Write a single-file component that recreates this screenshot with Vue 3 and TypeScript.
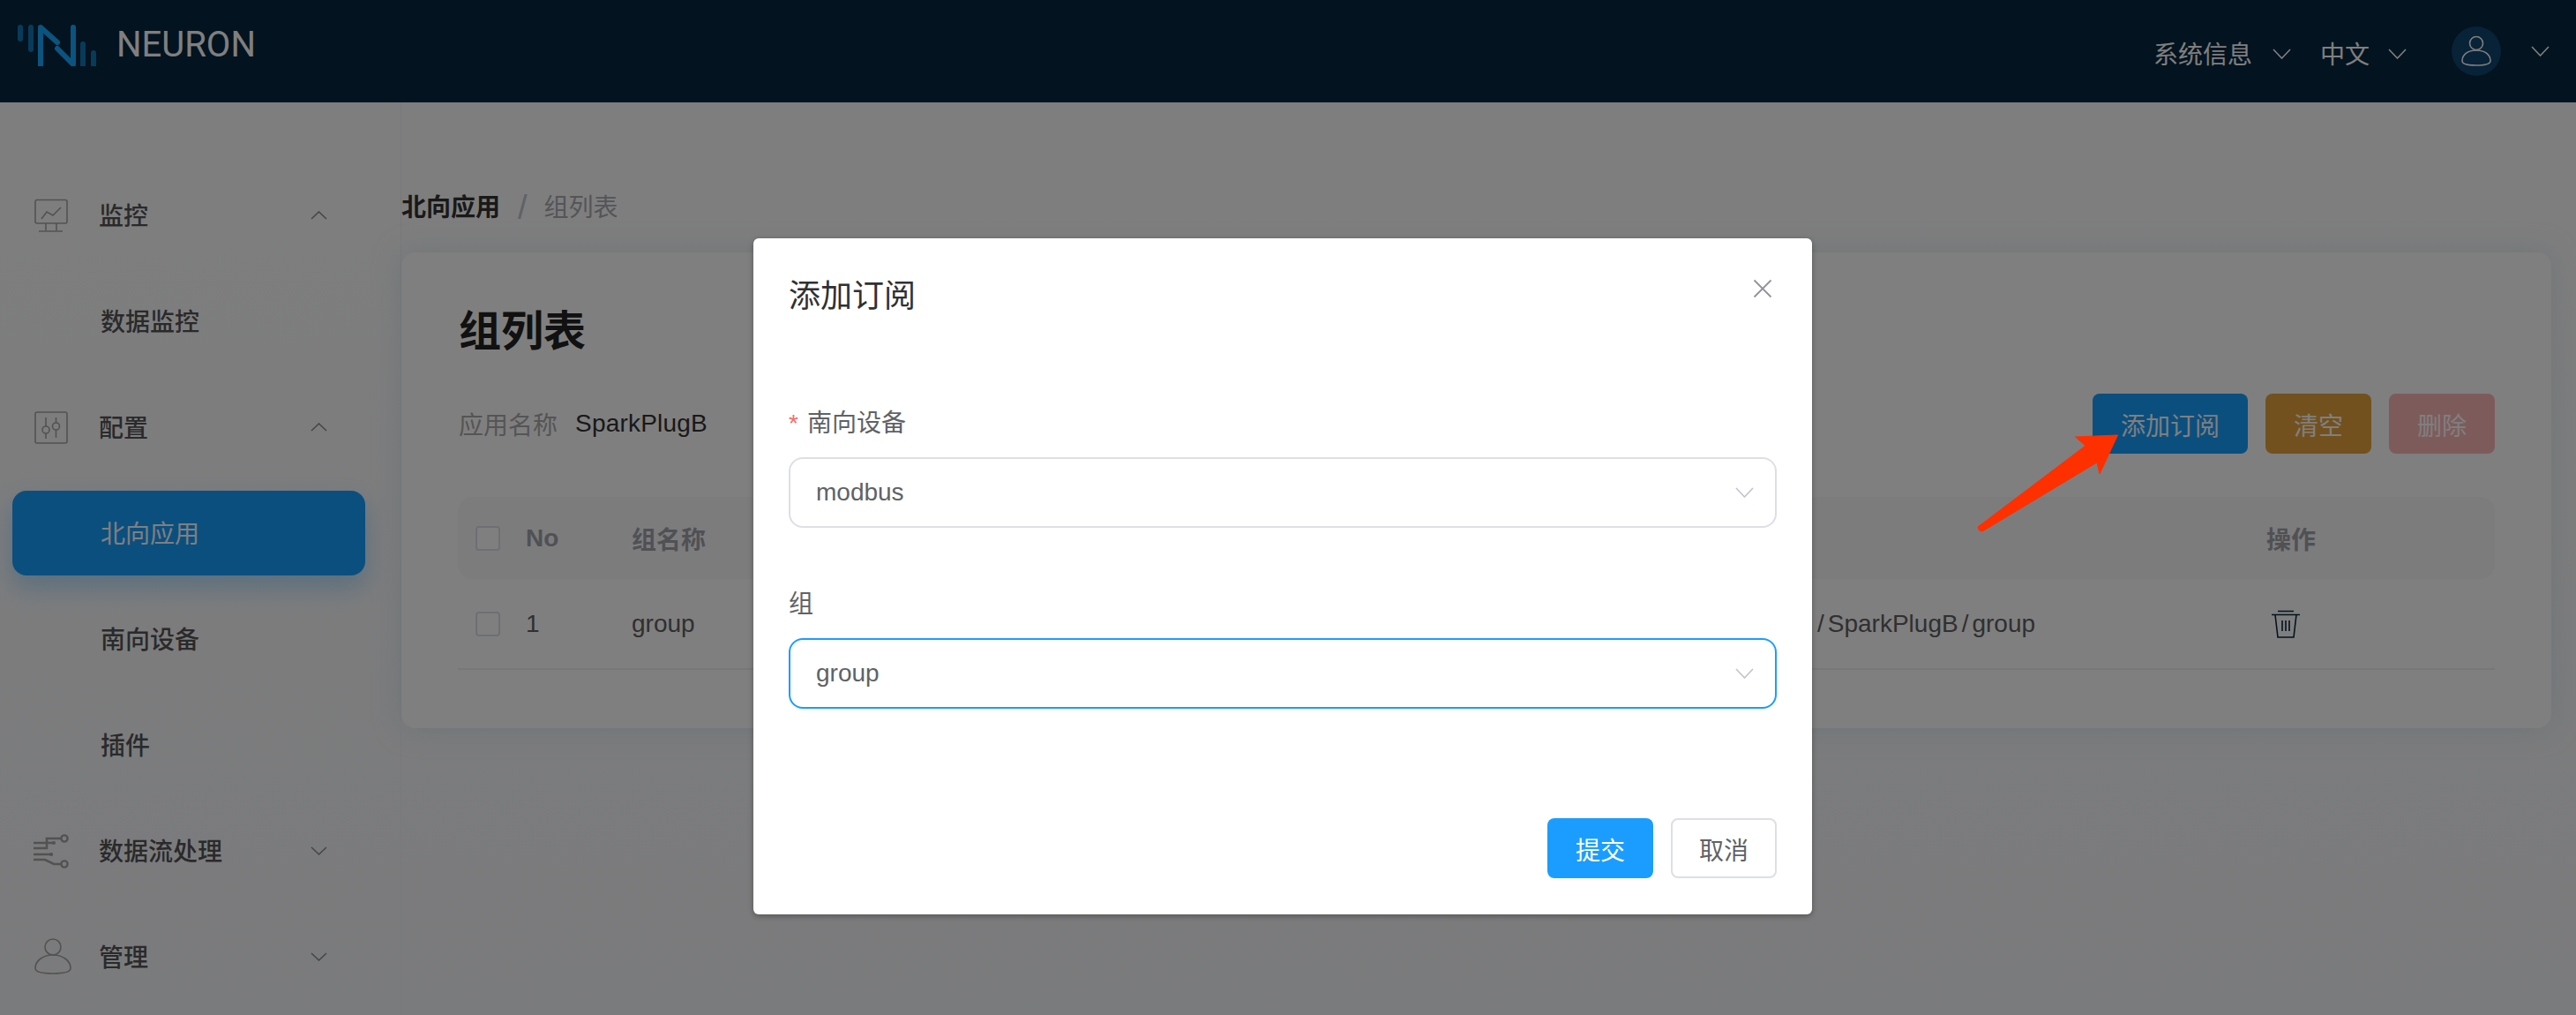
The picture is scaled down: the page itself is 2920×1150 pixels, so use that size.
<script setup lang="ts">
interface NavItem {
  label: string
  icon?: 'monitor' | 'config' | 'flow' | 'person'
  open?: boolean
  active?: boolean
}

const nav: NavItem[] = [
  { label: '监控', icon: 'monitor', open: true },
  { label: '数据监控' },
  { label: '配置', icon: 'config', open: true },
  { label: '北向应用', active: true },
  { label: '南向设备' },
  { label: '插件' },
  { label: '数据流处理', icon: 'flow', open: false },
  { label: '管理', icon: 'person', open: false },
]
</script>

<template>
  <div class="page">
    <header class="topbar">
      <svg class="logo" width="90" height="48" viewBox="0 0 90 48" fill="none" stroke-width="6" stroke-linecap="round">
        <g stroke="#17a8ff" opacity=".62">
          <path d="M3 4v13" />
          <path d="M15 4v25" />
          <path d="M74 23v24" />
          <path d="M86 33v14" />
        </g>
        <path stroke="#17a8ff" d="M26 47V4L45 21M45 28L63 46V4" stroke-linejoin="round" />
      </svg>
      <span class="brand">NEURON</span>
      <div class="top-right">
        <span class="top-text">系统信息</span>
        <svg class="chev chev-a" width="21" height="12" viewBox="0 0 21 12"><path d="M1 1l9.500 10L20 1" /></svg>
        <span class="top-text">中文</span>
        <svg class="chev chev-b" width="21" height="12" viewBox="0 0 21 12"><path d="M1 1l9.500 10L20 1" /></svg>
        <span class="avatar">
          <svg width="36" height="36" viewBox="0 0 36 36" fill="none" stroke="#fff" stroke-width="1.6">
            <circle cx="18" cy="9" r="7.500" />
            <path d="M18 17C8 17 2 22 2 29c0 4 9 5 16 5s16-1 16-5c0-7-6-12-16-12z" />
          </svg>
        </span>
        <svg class="chev" width="21" height="12" viewBox="0 0 21 12"><path d="M1 1l9.500 10L20 1" /></svg>
      </div>
    </header>

    <div class="body">
      <aside class="sidebar">
        <div v-for="item in nav" :key="item.label" class="nav-item" :class="{ active: item.active, sub: !item.icon }">
          <svg v-if="item.icon" class="nav-icon" width="44" height="44" viewBox="0 0 44 44" fill="none" stroke="#a4a4a4" stroke-width="1.6">
            <template v-if="item.icon === 'monitor'">
              <rect x="3" y="4.500" width="36" height="26.500" rx="2" />
              <path d="M10 26l6-8 7 4 9-9" />
              <path d="M15 31v8M27 31v8M7 40h27" />
            </template>
            <template v-else-if="item.icon === 'config'">
              <rect x="3" y="5" width="36" height="35" rx="2" />
              <path d="M15 11v10M15 29v6M26.500 11v6M26.500 25v9" />
              <circle cx="15" cy="25" r="4" />
              <circle cx="26.500" cy="21" r="4" />
            </template>
            <template v-else-if="item.icon === 'flow'">
              <path stroke-width="2.6" d="M32 8H16v11H1M1 13h16M17 13h6M1 26h22M1 32h13l10 5h8" />
              <circle cx="36" cy="8" r="3.600" stroke-width="2.4" />
              <circle cx="36" cy="37" r="3.600" stroke-width="2.4" />
              <circle cx="24" cy="13" r="2" fill="#a4a4a4" stroke="none" />
              <circle cx="21" cy="26" r="2" fill="#a4a4a4" stroke="none" />
            </template>
            <template v-else>
              <circle cx="23" cy="11" r="9" />
              <path d="M23 20C11 20 3 27 3 35c0 5 11 6 20 6s20-1 20-6c0-8-8-15-20-15z" />
            </template>
          </svg>
          <span class="nav-label">{{ item.label }}</span>
          <svg v-if="item.icon" class="chev nav-chev" :class="{ up: item.open }" width="19" height="10" viewBox="0 0 19 10">
            <path d="M1 1l8.500 8L18 1" />
          </svg>
        </div>
      </aside>

      <main class="main">
        <nav class="crumbs">
          <span class="crumb-strong">北向应用</span>
          <span class="crumb-sep">/</span>
          <span class="crumb-now">组列表</span>
        </nav>

        <section class="card">
          <h1 class="title">组列表</h1>
          <div class="info-row">
            <span class="info-key">应用名称</span>
            <span class="info-val">SparkPlugB</span>
            <div class="actions">
              <button class="btn primary wide">添加订阅</button>
              <button class="btn warning">清空</button>
              <button class="btn danger">删除</button>
            </div>
          </div>

          <div class="table">
            <div class="tr head">
              <span class="check"></span>
              <span>No</span>
              <span>组名称</span>
              <span></span>
              <span>操作</span>
            </div>
            <div class="tr row">
              <span class="check"></span>
              <span>1</span>
              <span>group</span>
              <span class="topic"><span class="slash">/</span>SparkPlugB<span class="slash">/</span>group</span>
              <svg class="trash" width="32" height="32" viewBox="0 0 32 32" fill="none" stroke="#06263e" stroke-width="1.6">
                <path d="M7 1.500h18M0 5.500h32M4 5.500L7 31h18l3-25.500M12 12v12M16 12v12M20 12v12" />
              </svg>
            </div>
          </div>
        </section>
      </main>
    </div>

    <div class="mask">
      <div class="dialog">
        <svg class="close" width="22" height="22" viewBox="0 0 22 22" stroke="#909399" stroke-width="1.800">
          <path d="M1.500 1.500l19 19M20.500 1.500l-19 19" />
        </svg>
        <h2 class="dialog-title">添加订阅</h2>

        <div class="field first">
          <label class="field-label"><span class="req">*</span>南向设备</label>
          <div class="select">
            <span>modbus</span>
            <svg class="chev select-chev" width="21" height="12" viewBox="0 0 21 12"><path d="M1 1l9.500 10L20 1" /></svg>
          </div>
        </div>
        <div class="field">
          <label class="field-label">组</label>
          <div class="select focus">
            <span>group</span>
            <svg class="chev select-chev" width="21" height="12" viewBox="0 0 21 12"><path d="M1 1l9.500 10L20 1" /></svg>
          </div>
        </div>

        <div class="dialog-foot">
          <button class="btn submit">提交</button>
          <button class="btn plain">取消</button>
        </div>
      </div>
    </div>

    <svg class="arrow" width="170" height="120" viewBox="2238 488 170 120">
      <path
        fill="#ff3000"
        stroke="#ff3000"
        stroke-width="1"
        stroke-linejoin="round"
        d="M2400.500 493L2380 537L2377 524L2248 601.500Q2243 603 2242 597L2364 505L2352.500 495Z"
      />
    </svg>
  </div>
</template>

<style scoped>
.page {
  position: relative;
  width: 2920px;
  height: 1150px;
  overflow: hidden;
  background: #f8f9fc;
  font-family: "Liberation Sans", "Noto Sans CJK SC", sans-serif;
  font-size: 28px;
  color: #333;
}

.topbar {
  height: 116px;
  display: flex;
  align-items: center;
  padding: 0 30px 0 20px;
  background: #06263e;
  box-sizing: border-box;
}
.logo {
  flex: none;
  margin-top: -14px;
}
.brand {
  margin-left: 22px;
  margin-top: -16px;
  font-family: Roboto, sans-serif;
  font-size: 40px;
  color: #fff;
}
.top-right {
  margin-left: auto;
  display: flex;
  align-items: center;
  color: #fff;
}
.top-text {
  font-size: 28px;
  line-height: 40px;
  margin-top: 10px;
}
.chev {
  fill: none;
  stroke: #fff;
  stroke-width: 1.6;
  flex: none;
}
.chev-a {
  margin: 6px 33px 0 23px;
}
.chev-b {
  margin: 6px 33px 0 21px;
}
.avatar {
  width: 56px;
  height: 56px;
  border-radius: 50%;
  background: #104470;
  display: flex;
  align-items: center;
  justify-content: center;
  margin: 0 34px 0 18px;
}

.body {
  display: flex;
  height: 1034px;
  background: linear-gradient(#fdfdfe, #f5f6f9);
}
.sidebar {
  width: 455px;
  flex: none;
  padding-top: 80px;
  box-sizing: border-box;
  border-right: 1px solid #f1f2f6;
}
.nav-item {
  height: 96px;
  margin: 0 40px 24px 14px;
  padding: 0 0 0 23px;
  display: flex;
  align-items: center;
  border-radius: 16px;
  color: #555;
  font-weight: 500;
}
.nav-item.sub {
  padding-left: 100px;
}
.nav-icon {
  flex: none;
  margin-right: 31px;
  overflow: visible;
}
.nav-label {
  line-height: 40px;
  padding-top: 4px;
}
.nav-chev {
  margin-left: auto;
  margin-right: 43px;
  stroke: #8c8c8c;
}
.nav-chev.up {
  transform: rotate(180deg);
}
.nav-item.active {
  background: #179eff;
  color: #fff;
  font-weight: 400;
  box-shadow: 0 14px 28px rgba(23, 158, 255, 0.3);
}

.main {
  flex: 1;
  min-width: 0;
  padding: 97px 28px 0 0;
}
.crumbs {
  box-sizing: border-box;
  height: 40px;
  padding-top: 5px;
  line-height: 35px;
  margin-bottom: 33px;
  display: flex;
}
.crumb-strong {
  font-weight: 700;
  color: #333;
}
.crumb-sep {
  margin: 0 19px 0 20px;
  font-size: 38px;
  color: #c0c4cc;
}
.crumb-now {
  color: #a8aaae;
}

.card {
  background: #fff;
  border-radius: 16px;
  padding: 59px 64px 66px;
  box-shadow: 0 0 30px rgba(195, 218, 226, 0.5);
}
.title {
  box-sizing: border-box;
  height: 60px;
  margin: 0 0 41px 1px;
  padding-top: 2px;
  font-size: 48px;
  line-height: 58px;
  font-weight: 700;
  color: #222;
}
.info-row {
  display: flex;
  align-items: center;
  height: 68px;
  margin-bottom: 49px;
}
.info-key {
  color: #aaa;
  margin: 0 20px 0 1px;
}
.info-val {
  letter-spacing: 0.2px;
}
.actions {
  margin-left: auto;
  display: flex;
  gap: 20px;
}
.btn {
  box-sizing: border-box;
  width: 120px;
  height: 68px;
  border: 0;
  border-radius: 8px;
  padding: 2px 0 0;
  font: inherit;
  color: #fff;
}
.btn.wide {
  width: 176px;
}
.primary {
  background: #179eff;
}
.warning {
  background: #e6a23c;
}
.danger {
  background: #fcb6b6;
}

.tr {
  display: grid;
  grid-template-columns: 77px 120px 1340px 513px 1fr;
  align-items: center;
}
.head {
  height: 93px;
  border-radius: 16px;
  background: #f8f9fb;
  color: #a0a3a8;
  font-weight: 700;
}
.row {
  height: 103px;
  border-bottom: 2px solid #eceef2;
  box-sizing: border-box;
  color: #606060;
}
.check {
  box-sizing: border-box;
  width: 28px;
  height: 28px;
  margin-left: 20px;
  border: 2px solid #dcdfe6;
  border-radius: 4px;
  background: #fff;
}
.slash {
  padding: 0 4px;
}
.trash {
  margin-left: 6px;
}

.mask {
  position: absolute;
  inset: 0;
  background: rgba(0, 0, 0, 0.5);
}
.dialog {
  position: relative;
  box-sizing: border-box;
  width: 1200px;
  height: 766px;
  margin: 270px 0 0 854px;
  padding: 40px;
  background: #fff;
  border-radius: 6px;
  box-shadow: 0 2px 6px rgba(0, 0, 0, 0.3);
  color: #606266;
}
.close {
  position: absolute;
  top: 46px;
  right: 45px;
}
.dialog-title {
  box-sizing: border-box;
  height: 48px;
  margin: 0;
  padding-top: 4px;
  font-size: 36px;
  line-height: 44px;
  font-weight: 400;
  color: #303133;
}
.field {
  margin-top: 65px;
}
.field.first {
  margin-top: 100px;
}
.field-label {
  display: block;
  box-sizing: border-box;
  height: 40px;
  padding-top: 4px;
  line-height: 36px;
  margin-bottom: 20px;
}
.req {
  color: #f56c6c;
  margin-right: 10px;
}
.select {
  box-sizing: border-box;
  height: 80px;
  display: flex;
  align-items: center;
  justify-content: space-between;
  padding: 0 24px 0 29px;
  border: 2px solid #dcdfe6;
  border-radius: 16px;
}
.select.focus {
  border-color: #1a9dff;
}
.select-chev {
  stroke: #c0c4cc;
}
.dialog-foot {
  display: flex;
  justify-content: flex-end;
  gap: 20px;
  margin-top: 124px;
}
.submit {
  background: #1a9dff;
}
.plain {
  background: #fff;
  border: 2px solid #dcdfe6;
  color: #606266;
}

.arrow {
  position: absolute;
  left: 2238px;
  top: 488px;
}
</style>

<style>
html,
body {
  margin: 0;
  overflow: hidden;
}
</style>
